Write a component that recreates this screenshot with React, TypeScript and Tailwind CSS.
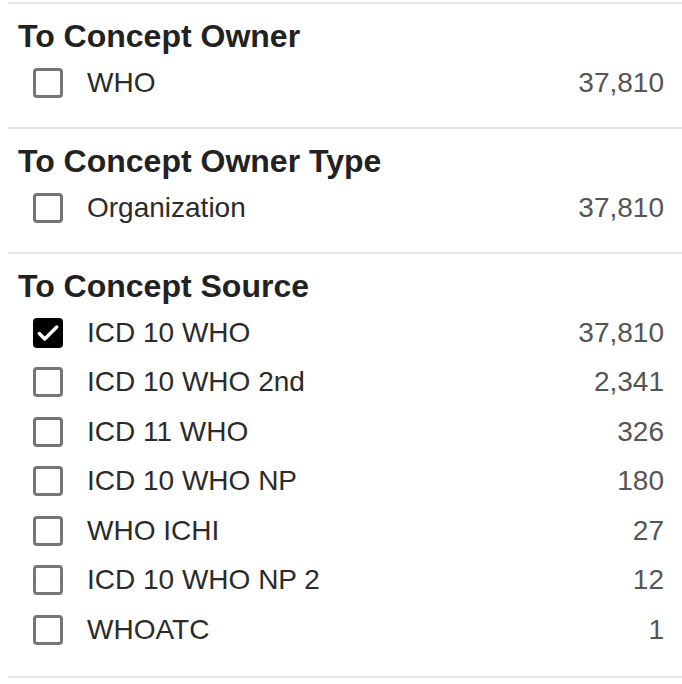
import React from "react";

type Item = { label: string; count: string; checked?: boolean };
type Section = { title: string; items: Item[] };

const sections: Section[] = [
  { title: "To Concept Owner", items: [{ label: "WHO", count: "37,810" }] },
  { title: "To Concept Owner Type", items: [{ label: "Organization", count: "37,810" }] },
  {
    title: "To Concept Source",
    items: [
      { label: "ICD 10 WHO", count: "37,810", checked: true },
      { label: "ICD 10 WHO 2nd", count: "2,341" },
      { label: "ICD 11 WHO", count: "326" },
      { label: "ICD 10 WHO NP", count: "180" },
      { label: "WHO ICHI", count: "27" },
      { label: "ICD 10 WHO NP 2", count: "12" },
      { label: "WHOATC", count: "1" },
    ],
  },
];

function Box({ checked }: { checked?: boolean }) {
  if (checked) {
    return (
      <div className="w-[30px] h-[30px] rounded-[4px] bg-black flex items-center justify-center shrink-0">
        <svg width="26" height="26" viewBox="0 0 24 24" fill="none">
          <path d="M4 12.5l5 5L20 6.5" stroke="white" strokeWidth="3.2" strokeLinecap="round" strokeLinejoin="round" />
        </svg>
      </div>
    );
  }
  return <div className="w-[30px] h-[30px] rounded-[4px] border-[3px] border-[#767676] bg-white shrink-0" />;
}

export default function App() {
  return (
    <div className="w-[682px] h-[684px] bg-white pt-[2px] pl-2 overflow-hidden" style={{ fontFamily: '"Liberation Sans", Arial, sans-serif' }}>
      {sections.map((s, i) => (
        <div
          key={s.title}
          className={
            i === sections.length - 1
              ? "border-t-2 border-[#e3e3e3] pt-3 pb-[21px] pl-[10px] pr-[18px]"
              : "border-t-2 border-[#e3e3e3] pt-3 pb-[19.5px] pl-[10px] pr-[18px]"
          }
        >
          <div className="h-[41px] leading-[41px] text-[32px] font-bold text-[#222] mb-[1px]">{s.title}</div>
          {s.items.map((it) => (
            <div key={it.label} className="h-[49.5px] flex items-center pl-[15px]">
              <Box checked={it.checked} />
              <span className="ml-6 text-[28px] leading-[32px] text-[#2b2b2b] flex-1">{it.label}</span>
              <span className="text-[28px] leading-[32px] text-[#555]">{it.count}</span>
            </div>
          ))}
        </div>
      ))}
      <div className="border-t-2 border-[#e3e3e3]" />
    </div>
  );
}
